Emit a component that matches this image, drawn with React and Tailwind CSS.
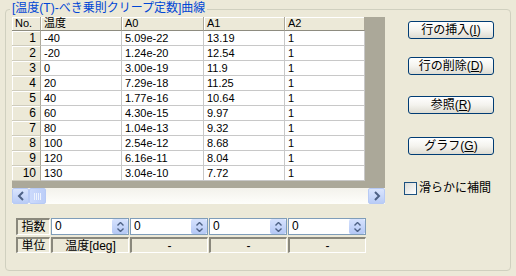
import React from "react";

const rows = [
  ["-40", "5.09e-22", "13.19", "1"],
  ["-20", "1.24e-20", "12.54", "1"],
  ["0", "3.00e-19", "11.9", "1"],
  ["20", "7.29e-18", "11.25", "1"],
  ["40", "1.77e-16", "10.64", "1"],
  ["60", "4.30e-15", "9.97", "1"],
  ["80", "1.04e-13", "9.32", "1"],
  ["100", "2.54e-12", "8.68", "1"],
  ["120", "6.16e-11", "8.04", "1"],
  ["130", "3.04e-10", "7.72", "1"],
];

const colW = ["w-[29px]", "w-[81px]", "w-[82px]", "w-[81px]", "w-[80px]"];
const headers = ["No.", "温度", "A0", "A1", "A2"];

function Chevron({ dir, className }) {
  // small bold chevron used by scroll and spin buttons
  const d = {
    left: "M6 1 L2 5 L6 9",
    right: "M2 1 L6 5 L2 9",
  }[dir];
  return (
    <svg width="8" height="10" viewBox="0 0 8 10" className={className}>
      <path d={d} fill="none" stroke="#4D6185" strokeWidth="2" />
    </svg>
  );
}

function SpinInput({ value }) {
  return (
    <div className="w-[78px] h-[17px] border border-[#7F9DB9] bg-white flex items-center">
      <span className="pl-[3px] text-[12px] leading-[15px]">{value}</span>
      <div className="ml-auto mr-[0px] w-[16px] h-[15px] rounded-[2px] bg-gradient-to-b from-[#D6E2FD] to-[#B4C8F5] flex flex-col items-center justify-center gap-[2px]">
        <svg width="7" height="4" viewBox="0 0 7 4">
          <path d="M0.5 3.5 L3.5 0.5 L6.5 3.5" fill="none" stroke="#4D6185" strokeWidth="1.4" />
        </svg>
        <svg width="7" height="4" viewBox="0 0 7 4">
          <path d="M0.5 0.5 L3.5 3.5 L6.5 0.5" fill="none" stroke="#4D6185" strokeWidth="1.4" />
        </svg>
      </div>
    </div>
  );
}

function Sunken({ className, children }) {
  return (
    <div
      className={
        "h-[16px] border-t-2 border-l-2 border-t-[#8A887C] border-l-[#8A887C] border-b border-r border-b-white border-r-white bg-[#ECE9D8] flex items-center justify-center text-[12px] leading-[14px] " +
        className
      }
    >
      {children}
    </div>
  );
}

function XpButton({ children, className }) {
  return (
    <button
      className={
        "w-[86px] h-[18px] border border-[#003C74] rounded-[3px] bg-gradient-to-b from-white via-[#F4F3EE] to-[#DEDCD2] text-[12px] leading-[16px] text-black text-center " +
        className
      }
    >
      {children}
    </button>
  );
}

export default function App() {
  return (
    <div className="w-[516px] h-[276px] bg-[#ECE9D8] pt-[9px] pl-[5px] pr-[5px] font-['Liberation_Sans','Noto_Sans_CJK_JP',sans-serif] text-black">
      <div className="relative h-[262px] border border-[#D0D0BF] rounded-[4px] pt-[7px] pl-[6px]">
        {/* group title */}
        <div className="absolute left-[4px] top-[-10px] px-[2px] bg-[#ECE9D8] text-[#0046D5] text-[12px] leading-[16px]">
          [温度(T)-べき乗則クリープ定数]曲線
        </div>

        <div className="flex">
          {/* left: grid + scroll + inputs */}
          <div className="w-[373px]">
            <div className="w-[373px] h-[171px] bg-[#ABA899] overflow-hidden">
              <div className="flex">
                {headers.map((h, i) => (
                  <div
                    key={h}
                    className={
                      colW[i] +
                      " h-[14px] bg-[#ECE9D8] border-r border-b border-r-[#ACA899] border-b-[#8E8C80] shadow-[inset_1px_1px_0_#fff] pl-[3px] text-[11px] leading-[13px]"
                    }
                  >
                    {h}
                  </div>
                ))}
              </div>
              {rows.map((r, ri) => (
                <div key={ri} className="flex">
                  <div className="w-[29px] h-[15px] bg-[#ECE9D8] border-r border-b border-r-[#ACA899] border-b-[#CFCCBD] shadow-[inset_1px_1px_0_#fff] pr-[4px] text-right text-[12px] leading-[14px]">
                    {ri + 1}
                  </div>
                  {r.map((c, ci) => (
                    <div
                      key={ci}
                      className={
                        colW[ci + 1] +
                        " h-[15px] bg-white border-r border-b border-[#C8C8C8] pl-[3px] text-[11px] leading-[14px]"
                      }
                    >
                      {c}
                    </div>
                  ))}
                </div>
              ))}
            </div>

            {/* horizontal scrollbar */}
            <div className="flex h-[16px] bg-gradient-to-b from-[#F3F2EC] to-[#FEFEFB]">
              <div className="w-[17px] h-[16px] rounded-[2px] border border-[#B7CAF5] bg-gradient-to-b from-[#DAE5FD] to-[#B9CCF6] flex items-center justify-center">
                <Chevron dir="left" />
              </div>
              <div className="w-[17px] h-[16px] rounded-[2px] border border-[#B7CAF5] bg-gradient-to-r from-[#CCDAFC] to-[#BCCEF8] flex items-center justify-center gap-[1px]">
                <span className="w-[1px] h-[7px] bg-[#EEF3FE]" />
                <span className="w-[1px] h-[7px] bg-[#EEF3FE]" />
                <span className="w-[1px] h-[7px] bg-[#EEF3FE]" />
                <span className="w-[1px] h-[7px] bg-[#EEF3FE]" />
              </div>
              <div className="ml-auto w-[17px] h-[16px] rounded-[2px] border border-[#B7CAF5] bg-gradient-to-b from-[#DAE5FD] to-[#B9CCF6] flex items-center justify-center">
                <Chevron dir="right" />
              </div>
            </div>

            {/* exponents / units */}
            <div className="mt-[14px] ml-[4px] flex flex-col gap-[2px]">
              <div className="flex gap-[1px]">
                <Sunken className="w-[34px] h-[17px]">指数</Sunken>
                <SpinInput value="0" />
                <SpinInput value="0" />
                <SpinInput value="0" />
                <SpinInput value="0" />
              </div>
              <div className="flex gap-[1px]">
                <Sunken className="w-[34px]">単位</Sunken>
                <Sunken className="w-[78px]">温度[deg]</Sunken>
                <Sunken className="w-[78px]">-</Sunken>
                <Sunken className="w-[78px]">-</Sunken>
                <Sunken className="w-[78px]">-</Sunken>
              </div>
            </div>
          </div>

          {/* right: buttons */}
          <div className="ml-[23px] flex flex-col">
            <XpButton className="mt-[4px]">
              行の挿入(<span className="underline">I</span>)
            </XpButton>
            <XpButton className="mt-[18px]">
              行の削除(<span className="underline">D</span>)
            </XpButton>
            <XpButton className="mt-[21px]">
              参照(<span className="underline">R</span>)
            </XpButton>
            <XpButton className="mt-[23px]">
              グラフ(<span className="underline">G</span>)
            </XpButton>
            <label className="mt-[26px] -ml-[4px] flex items-center gap-[2px] text-[12px] leading-[14px]">
              <span className="w-[13px] h-[13px] border border-[#1C5180] bg-gradient-to-br from-[#DCDCD7] to-white" />
              滑らかに補間
            </label>
          </div>
        </div>
      </div>
    </div>
  );
}
